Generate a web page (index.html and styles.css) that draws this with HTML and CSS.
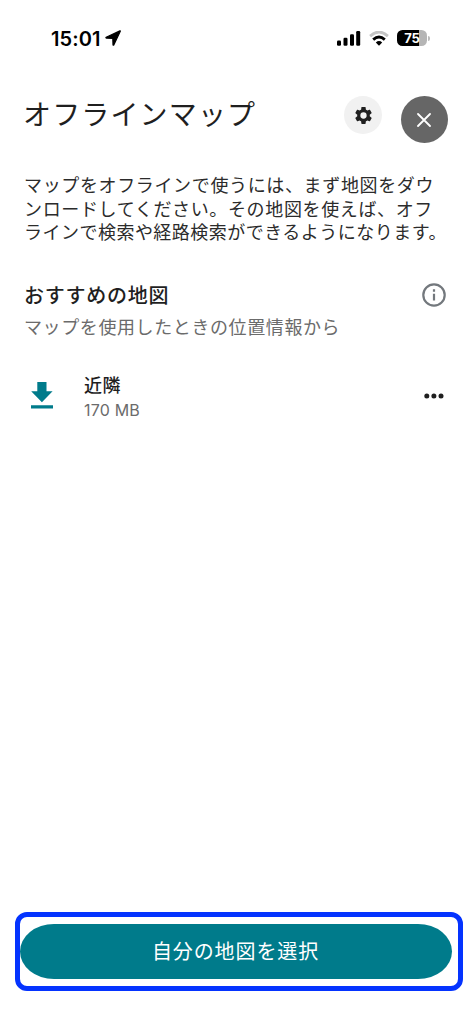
FILE: index.html
```html
<!DOCTYPE html>
<html lang="ja">
<head>
<meta charset="utf-8">
<title>オフラインマップ</title>
<link rel="stylesheet" href="styles.css">
</head>
<body>
<div class="screen">
  <div class="status">
    <div class="clock"><span class="time">15:01</span>
      <svg class="arrow" viewBox="0 0 16 16"><path d="M14.9.9 1.2 7.2q-.8.6.2.9l6.4.2.2 6.4q.3.9.9.1L15.3 1.3q.2-.6-.4-.4Z"/></svg>
    </div>
    <svg class="signal" viewBox="0 0 24 16"><rect x="0" y="10.5" width="4" height="5.2" rx="1.2"/><rect x="6.5" y="7.8" width="4" height="7.9" rx="1.2"/><rect x="13" y="4.3" width="4" height="11.4" rx="1.2"/><rect x="19.2" y="1" width="4" height="14.7" rx="1.2"/></svg>
    <svg class="wifi" viewBox="0 0 20 15"><path class="wifi-off" d="M1.1 5.1Q10-3 18.9 5.1"/><path class="wifi-on" d="M4.2 8.6Q10 3.4 15.8 8.6"/><path d="M6.8 11.4Q10 8.6 13.2 11.4L10 14.8Z"/></svg>
    <div class="battery"><div class="cell"><span>75</span></div><i class="tip"></i></div>
  </div>
  <header class="header">
    <h1>オフラインマップ</h1>
    <button class="settings" aria-label="設定"><svg viewBox="0 0 24 24"><path d="M19.14 12.94c.04-.3.06-.61.06-.94 0-.32-.02-.64-.07-.94l2.03-1.58c.18-.14.23-.41.12-.61l-1.92-3.32c-.12-.22-.37-.29-.59-.22l-2.39.96c-.5-.38-1.03-.7-1.62-.94l-.36-2.54c-.04-.24-.24-.41-.48-.41h-3.84c-.24 0-.43.17-.47.41l-.36 2.54c-.59.24-1.13.57-1.62.94l-2.39-.96c-.22-.08-.47 0-.59.22L2.74 8.87c-.12.21-.08.47.12.61l2.03 1.58c-.05.3-.09.63-.09.94s.02.64.07.94l-2.03 1.58c-.18.14-.23.41-.12.61l1.92 3.32c.12.22.37.29.59.22l2.39-.96c.5.38 1.03.7 1.62.94l.36 2.54c.05.24.24.41.48.41h3.84c.24 0 .44-.17.47-.41l.36-2.54c.59-.24 1.13-.56 1.62-.94l2.39.96c.22.08.47 0 .59-.22l1.92-3.32c.12-.22.07-.47-.12-.61l-2.01-1.58zM12 15.6A3.6 3.6 0 1 1 12 8.4a3.6 3.6 0 0 1 0 7.2z"/></svg></button>
    <button class="close" aria-label="閉じる"><svg viewBox="0 0 14 14"><path d="M1 1 13 13M13 1 1 13"/></svg></button>
  </header>
  <p class="intro">マップをオフラインで使うには、まず地図をダウ<br>ンロードしてください。その地図を使えば、オフ<br><span class="tight">ラインで検索や経路検索ができるようになります。</span></p>
  <section class="suggested">
    <div class="section-head">
      <h2>おすすめの地図</h2>
      <svg class="info" viewBox="0 0 24 24"><circle cx="12" cy="12" r="10.7"/><path d="M12 10.7v6.8M12 6.3v2.4"/></svg>
    </div>
    <p class="source">マップを使用したときの位置情報から</p>
    <div class="item">
      <svg class="download" viewBox="0 0 22 27"><path d="M6.3 0h9.2v9.3h6.1L10.9 20.2.2 9.3h6.1ZM0 23.3h22v3.3H0Z"/></svg>
      <div class="item-text"><div class="name">近隣</div><div class="size">170 MB</div></div>
      <svg class="more" viewBox="0 0 20 6"><circle cx="2.8" cy="3" r="2.5"/><circle cx="9.9" cy="3" r="2.5"/><circle cx="17" cy="3" r="2.5"/></svg>
    </div>
  </section>
  <div class="highlight"><button class="choose">自分の地図を選択</button></div>
</div>
</body>
</html>
```
FILE: styles.css
```css
* { box-sizing: border-box; }
body, h1, h2, p { margin: 0; }
body { background: #fff; color: #1f1f1f; font-family: "Noto Sans CJK JP", sans-serif; }
button { border: 0; padding: 0; font: inherit; }
svg { display: block; flex: none; }
.screen { height: 1024px; display: flex; flex-direction: column; overflow: hidden; }

.status { height: 76px; padding: 0 41px 0 51px; display: flex; align-items: center; color: #000; }
.clock { display: flex; align-items: center; gap: 4px; margin-right: auto; }
.time { font: 600 20px/24px Inter, sans-serif; letter-spacing: 0.1px; padding-top: 1px; }
.arrow { width: 16px; height: 16px; stroke: #000; stroke-width: 1.2; stroke-linejoin: round; }
.signal { width: 24px; height: 16px; margin-right: 8px; }
.wifi { width: 20px; height: 15px; margin: 1px 8px 0 0; }
.wifi path { stroke-width: 2.8; }
.wifi path:last-child { stroke: none; }
.wifi .wifi-off { fill: none; stroke: #c4c4c4; }
.wifi .wifi-on { fill: none; stroke: #000; }
.battery { display: flex; align-items: center; gap: 1px; }
.cell { width: 30px; height: 16px; border-radius: 5.5px; background: linear-gradient(90deg, #000 75%, #b5b5b5 75%); color: #fff; font: 700 13px/16px Inter, sans-serif; text-align: center; }
.tip { width: 2px; height: 5px; border-radius: 0 2px 2px 0; background: #bbb; }

.header { height: 67px; padding: 20px 23.5px 0 23px; display: flex; align-items: flex-start; }
h1 { margin: -4px auto 0 0; font-size: 28px; line-height: 42px; font-weight: 400; letter-spacing: 1.15px; white-space: nowrap; }
.settings { width: 38px; height: 38px; margin-right: 18.5px; border-radius: 50%; background: #f1f1f1; display: grid; place-items: center; }
.settings svg { width: 21px; height: 21px; fill: #1f1f1f; }
.close { width: 47px; height: 47px; border-radius: 50%; background: #666; display: grid; place-items: center; }
.close svg { width: 14px; height: 14px; stroke: #fff; stroke-width: 1.8; stroke-linecap: round; }

.intro { margin: 30px 0 0 24px; font-size: 18px; line-height: 23.6px; letter-spacing: 0.64px; white-space: nowrap; color: #2b2b2b; }
.tight { letter-spacing: 0.48px; }
.suggested { padding: 36px 25.5px 0 24px; }
.section-head { display: flex; justify-content: space-between; align-items: center; height: 30px; }
h2 { font-size: 20px; line-height: 30px; font-weight: 500; letter-spacing: 0.75px; }
.info { width: 24px; height: 24px; fill: none; stroke: #73787d; stroke-width: 2.2; }
.source { margin-top: 3px; font-size: 18px; line-height: 26px; letter-spacing: 0.6px; color: #6b6b6b; }
.item { margin-top: 32px; padding-left: 7px; height: 50px; display: flex; align-items: center; }
.download { width: 22px; height: 27px; fill: #007b8b; }
.item-text { margin: 0 auto 0 31px; padding-top: 2px; }
.name { font-size: 18px; line-height: 26px; font-weight: 500; letter-spacing: 0.5px; }
.size { font: 400 16px/24px Inter, sans-serif; letter-spacing: 0.2px; color: #6b6b6b; padding-top: 1px; }
.more { width: 20px; height: 6px; margin-right: 2px; fill: #1f1f1f; }

.highlight { margin: auto 8.5px 33px 15.3px; height: 79px; border: 5px solid #0433ff; border-radius: 12px; padding: 7px 5.3px 7px 0; display: flex; }
.choose { flex: 1; height: 55px; margin-left: -0.5px; padding: 0 1px 2px 0; border-radius: 34px / 27.5px; background: #007b8b; color: #fff; font-size: 20px; line-height: 53px; letter-spacing: 0.9px; font-weight: 400; }
```
